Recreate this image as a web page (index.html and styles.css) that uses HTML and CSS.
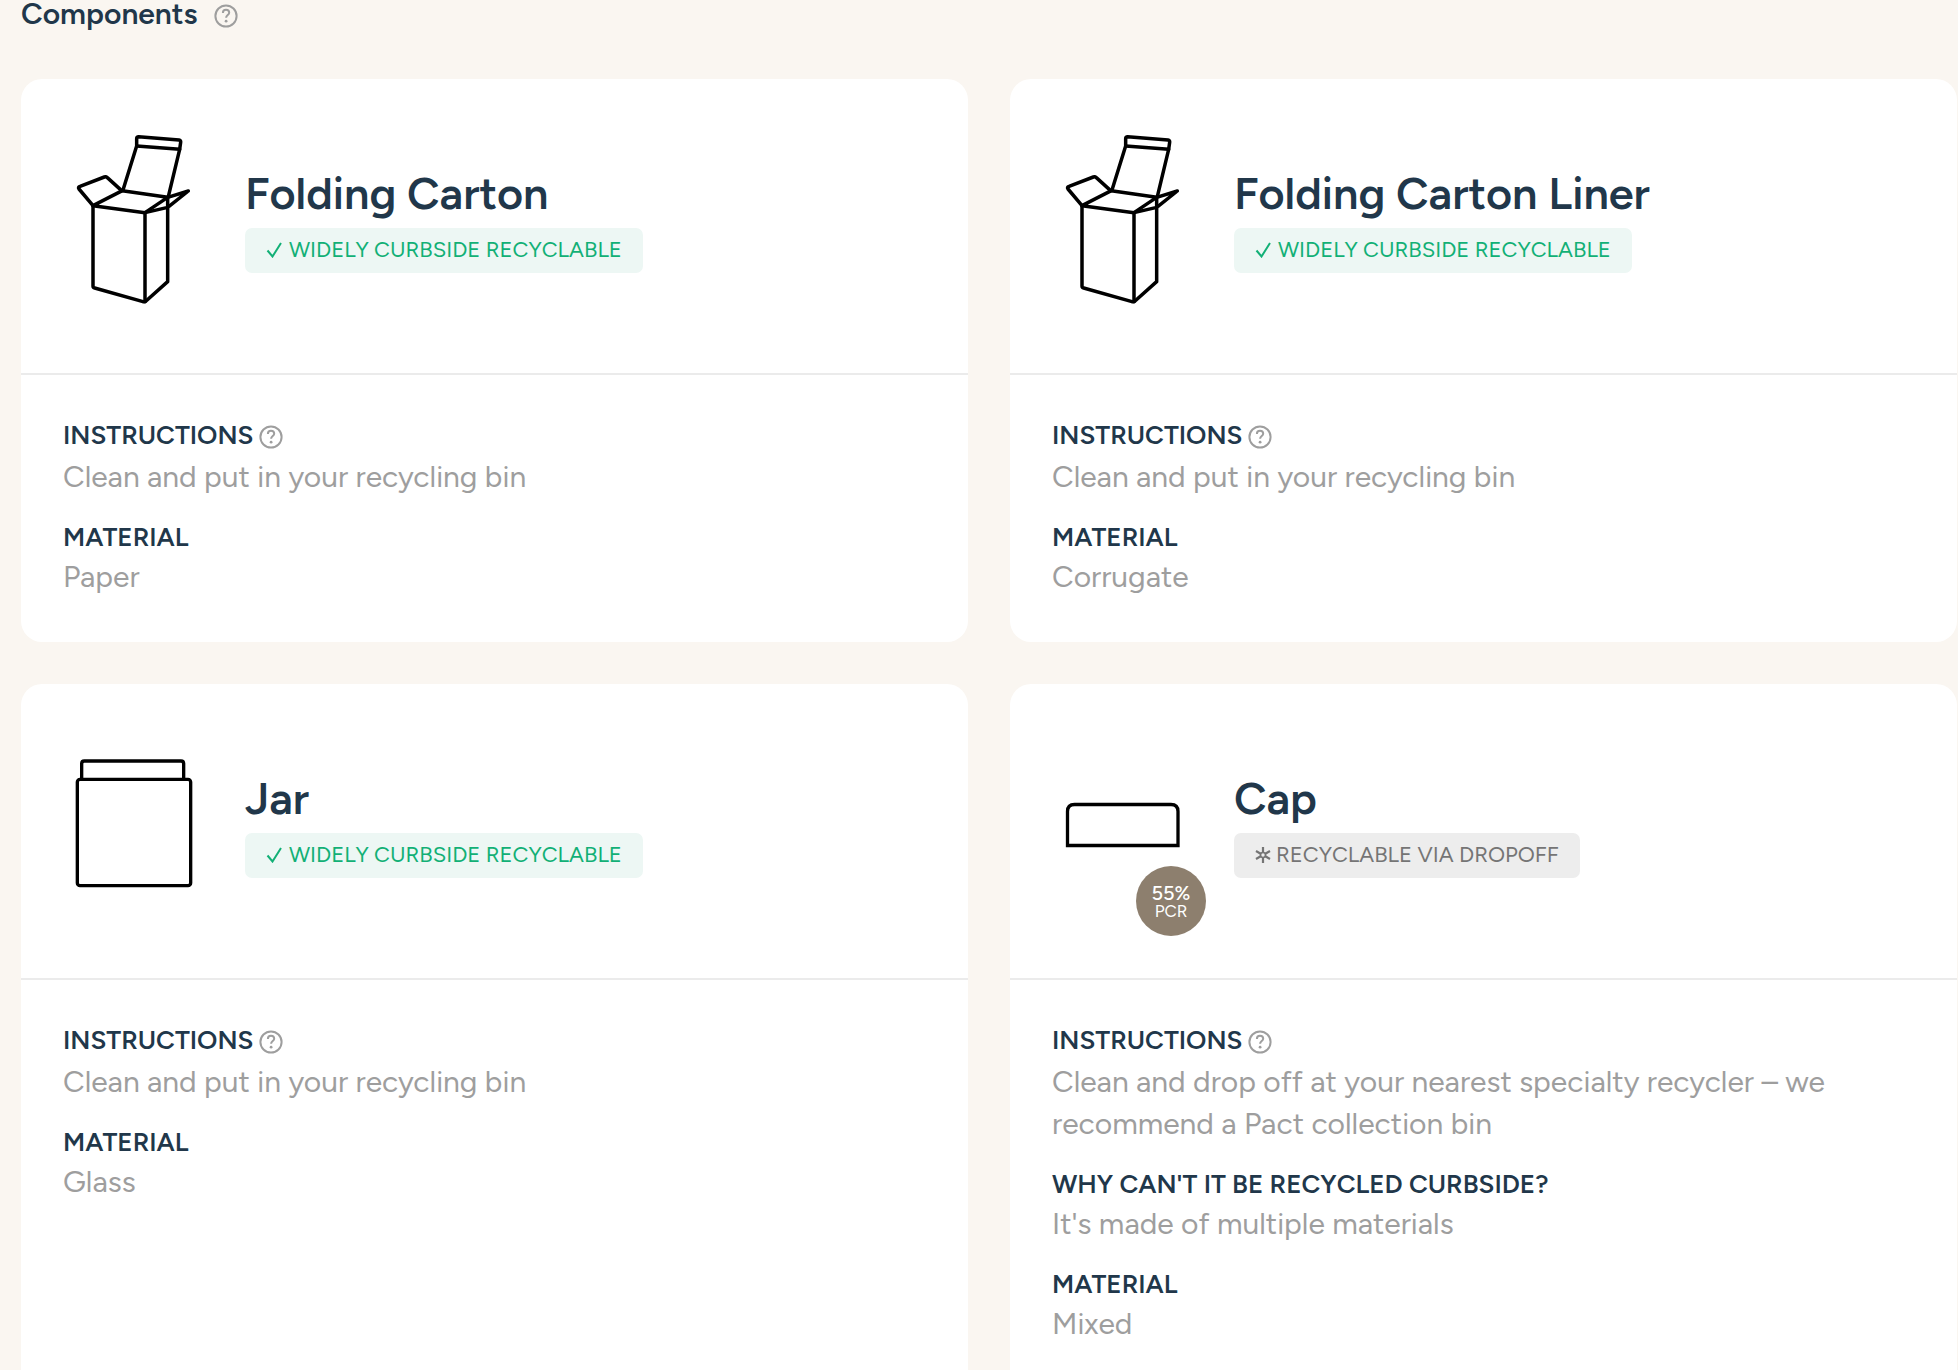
FILE: index.html
```html
<!DOCTYPE html>
<html lang="en">
<head>
<meta charset="utf-8">
<meta name="viewport" content="width=device-width, initial-scale=1">
<title>Components</title>
<link rel="stylesheet" href="styles.css">
</head>
<body>
<svg class="sprite" aria-hidden="true">
  <symbol id="help" viewBox="0 0 24 24">
    <circle cx="12" cy="12" r="10.6" fill="none" stroke="currentColor" stroke-width="2"/>
    <path d="M8.9 9c0-2 1.300-3.200 3.100-3.200s3.200 1.200 3.200 2.900c0 2.300-3.100 2.500-3.100 5.100" fill="none" stroke="currentColor" stroke-width="2"/>
    <circle cx="12.100" cy="17.200" r="1.400" fill="currentColor"/>
  </symbol>
  <symbol id="check" viewBox="0 0 16 16">
    <path d="M1.500 8.500l5 6L15 1" fill="none" stroke="currentColor" stroke-width="2"/>
  </symbol>
  <symbol id="star" viewBox="0 0 16 16">
    <path d="M8 0v5.500M8 10.500V16M1 4l4.700 2.700M10.300 9.300L15 12M15 4l-4.700 2.700M5.700 9.300L1 12" fill="none" stroke="currentColor" stroke-width="2.200"/>
    <circle cx="8" cy="8" r="2.500" fill="none" stroke="currentColor" stroke-width="1.600"/>
  </symbol>
  <symbol id="carton" viewBox="39 33 420 630">
    <g fill="none" stroke="#000" stroke-width="10.500" stroke-linejoin="round" stroke-linecap="round">
      <path d="M129 287V528Q129 533 134 534L279 575Q284 576 288 573L353 515V262"/>
      <path d="M285 308V575"/>
      <path d="M129 287L285 308L353 262L217 242Z"/>
      <path d="M129 287L87 237Q83 231 90 229L163 201Q168 199 172 203L215 242"/>
      <path d="M219 240L260 108V86Q260 80 266 80L387 90Q393 91 392 97L389 118L355 260"/>
      <path d="M260 108L389 118"/>
      <path d="M353 262L415 243L357 289L350 293L285 308"/>
    </g>
  </symbol>
  <symbol id="jar" viewBox="39 -39 420 630">
    <g fill="none" stroke="#000" stroke-width="10">
      <rect x="82" y="121" width="340" height="319" rx="8"/>
      <path d="M95 121V74Q95 66 103 66H393Q401 66 401 74V121"/>
    </g>
  </symbol>
  <symbol id="cap" viewBox="0 0 140 210">
    <path d="M15.500 119.500V85.500q0-7 7-7h96.500q7 0 7 7v34z" fill="none" stroke="#000" stroke-width="3.300"/>
  </symbol>
</svg>

<main class="page">
  <header class="page-head">
    <h1 class="page-title">Components</h1>
    <button class="help" type="button" aria-label="About components"><svg><use href="#help"/></svg></button>
  </header>

  <section class="cards">
    <article class="card">
      <header class="card-head">
        <div class="picture"><svg><use href="#carton"/></svg></div>
        <div class="summary">
          <h2 class="name">Folding Carton</h2>
          <span class="tag tag-good"><svg><use href="#check"/></svg>WIDELY CURBSIDE RECYCLABLE</span>
        </div>
      </header>
      <div class="details">
        <div class="detail">
          <div class="label-row"><h3 class="label">INSTRUCTIONS</h3><button class="help" type="button" aria-label="About instructions"><svg><use href="#help"/></svg></button></div>
          <p class="value">Clean and put in your recycling bin</p>
        </div>
        <div class="detail"><h3 class="label">MATERIAL</h3><p class="value">Paper</p></div>
      </div>
    </article>

    <article class="card">
      <header class="card-head">
        <div class="picture"><svg><use href="#carton"/></svg></div>
        <div class="summary">
          <h2 class="name">Folding Carton Liner</h2>
          <span class="tag tag-good"><svg><use href="#check"/></svg>WIDELY CURBSIDE RECYCLABLE</span>
        </div>
      </header>
      <div class="details">
        <div class="detail">
          <div class="label-row"><h3 class="label">INSTRUCTIONS</h3><button class="help" type="button" aria-label="About instructions"><svg><use href="#help"/></svg></button></div>
          <p class="value">Clean and put in your recycling bin</p>
        </div>
        <div class="detail"><h3 class="label">MATERIAL</h3><p class="value">Corrugate</p></div>
      </div>
    </article>

    <article class="card">
      <header class="card-head">
        <div class="picture"><svg><use href="#jar"/></svg></div>
        <div class="summary">
          <h2 class="name">Jar</h2>
          <span class="tag tag-good"><svg><use href="#check"/></svg>WIDELY CURBSIDE RECYCLABLE</span>
        </div>
      </header>
      <div class="details">
        <div class="detail">
          <div class="label-row"><h3 class="label">INSTRUCTIONS</h3><button class="help" type="button" aria-label="About instructions"><svg><use href="#help"/></svg></button></div>
          <p class="value">Clean and put in your recycling bin</p>
        </div>
        <div class="detail"><h3 class="label">MATERIAL</h3><p class="value">Glass</p></div>
      </div>
    </article>

    <article class="card">
      <header class="card-head">
        <div class="picture"><svg><use href="#cap"/></svg>
          <div class="badge"><span class="badge-share">55%</span><span class="badge-kind">PCR</span></div>
        </div>
        <div class="summary">
          <h2 class="name">Cap</h2>
          <span class="tag tag-dropoff"><svg><use href="#star"/></svg>RECYCLABLE VIA DROPOFF</span>
        </div>
      </header>
      <div class="details">
        <div class="detail">
          <div class="label-row"><h3 class="label">INSTRUCTIONS</h3><button class="help" type="button" aria-label="About instructions"><svg><use href="#help"/></svg></button></div>
          <p class="value">Clean and drop off at your nearest specialty recycler – we recommend a Pact collection bin</p>
        </div>
        <div class="detail"><h3 class="label">WHY CAN'T IT BE RECYCLED CURBSIDE?</h3><p class="value">It's made of multiple materials</p></div>
        <div class="detail"><h3 class="label">MATERIAL</h3><p class="value">Mixed</p></div>
      </div>
    </article>
  </section>
</main>
</body>
</html>
```
FILE: styles.css
```css
* { box-sizing: border-box; }

body {
  margin: 0;
  background: #faf6f1;
  color: #21374a;
  font-family: Figtree, Inter, "Liberation Sans", sans-serif;
}

h1, h2, h3, p { margin: 0; }

.sprite { display: none; }

.page {
  height: 100vh;
  overflow: hidden;
  padding: 0 1px 0 21px;
}

.page-head {
  display: flex;
  align-items: flex-start;
  gap: 16px;
  height: 79px;
}

.page-title {
  font-size: 30px;
  line-height: 28px;
  font-weight: 600;
}

.help {
  flex: none;
  margin-top: 4px;
  padding: 0;
  border: 0;
  background: none;
  color: #9e9e9e;
  cursor: pointer;
}

.help svg { display: block; width: 24px; height: 24px; }

.cards {
  display: grid;
  grid-template-columns: 1fr 1fr;
  gap: 42px;
}

.card {
  background: #fff;
  border-radius: 21px;
}

.card-head {
  display: flex;
  align-items: center;
  gap: 42px;
  padding: 42px;
  border-bottom: 2px solid #ebebeb;
}

.picture {
  position: relative;
  flex: none;
  width: 140px;
}

.picture svg { display: block; width: 140px; height: 210px; }

.badge {
  position: absolute;
  right: -14px;
  bottom: 0;
  display: flex;
  flex-direction: column;
  align-items: center;
  justify-content: center;
  width: 70px;
  height: 70px;
  border-radius: 50%;
  background: #8d7f6e;
  color: #fff;
}

.badge-share { font-size: 20px; line-height: 20px; font-weight: 500; }
.badge-kind { font-size: 17px; line-height: 17px; }

.summary {
  display: flex;
  flex-direction: column;
  align-items: flex-start;
  gap: 10px;
  padding-bottom: 11px;
}

.name {
  font-size: 45px;
  line-height: 50px;
  font-weight: 600;
}

.tag {
  display: flex;
  align-items: center;
  gap: 7px;
  padding: 0 21px 2px;
  border-radius: 7px;
  font-size: 22px;
  line-height: 43px;
}

.tag svg { width: 16px; height: 16px; }
.tag-good { background: #edf7f4; color: #12b076; }
.tag-dropoff { gap: 5px; background: #ededed; color: #757575; }

.details {
  display: flex;
  flex-direction: column;
  gap: 23px;
  padding: 44px 42px;
}

.detail {
  display: flex;
  flex-direction: column;
  gap: 3px;
}

.label-row {
  display: flex;
  align-items: flex-start;
  gap: 6px;
  height: 34px;
}

.label-row .help { margin-top: 6px; }

.label {
  font-size: 26px;
  line-height: 32px;
  font-weight: 600;
}

.value {
  color: #9e9e9e;
  font-size: 30px;
  line-height: 42px;
}
```
